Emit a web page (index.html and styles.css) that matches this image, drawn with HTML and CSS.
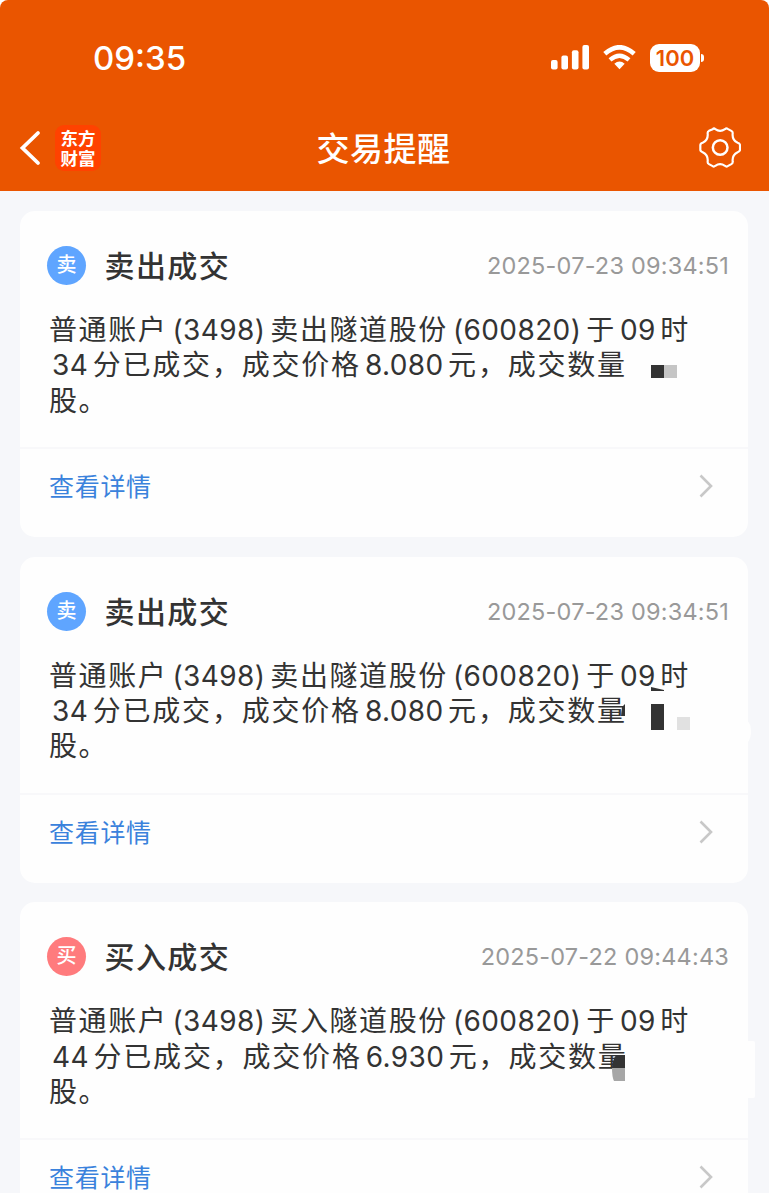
FILE: index.html
```
<!DOCTYPE html>
<html lang="zh-CN">
<head>
    <meta charset="UTF-8">
    <meta name="viewport" content="width=device-width, initial-scale=1.0">
    <title>交易提醒</title>
    <link rel="stylesheet" href="styles.css">
</head>
<body>
    <header class="header">
        <div class="status-bar">
            <span class="clock">09:35</span>
            <div class="status-icons">
                <svg class="signal" viewBox="0 0 38 25" fill="#fff">
                    <rect x="0" y="15" width="6.6" height="9.5" rx="2"/>
                    <rect x="10.4" y="10.5" width="6.6" height="14" rx="2"/>
                    <rect x="20.9" y="5.2" width="6.6" height="19.3" rx="2"/>
                    <rect x="31.4" y="0" width="6.6" height="24.5" rx="2"/>
                </svg>
                <svg class="wifi" viewBox="0 0 33 25">
                    <path d="M1.800 8.800 Q16.500 -4.200 31.200 8.800" fill="none" stroke="#fff" stroke-width="4.600"/>
                    <path d="M7 14.800 Q16.500 6.500 26 14.800" fill="none" stroke="#fff" stroke-width="4.300"/>
                    <path d="M11.300 18.800 Q16.500 14.400 21.700 18.800 L16.500 24.300 Z" fill="#fff"/>
                </svg>
                <div class="battery">100</div>
            </div>
        </div>
        <nav class="nav-bar">
            <div class="nav-left">
                <svg class="back" viewBox="0 0 22 36">
                    <path d="M19 3 L3.500 18 L19 33" fill="none" stroke="#fff" stroke-width="3.800" stroke-linecap="round"/>
                </svg>
                <div class="logo"><span>东方</span><span>财富</span></div>
            </div>
            <h1>交易提醒</h1>
            <svg class="gear" viewBox="478 290 126 122" fill="none" stroke="#fff">
                <path d="M519 296 Q523 292 527 296 Q541 306 556 296 Q560 292 564 295 L575 301 Q580 304 579 309 Q577 329 594 337 Q601 339 601 344 L601 358 Q601 363 594 365 Q577 373 579 393 Q580 398 575 401 L564 407 Q560 410 556 406 Q541 396 527 406 Q523 410 519 407 L508 401 Q503 398 504 393 Q506 373 489 365 Q482 363 482 358 L482 344 Q482 339 489 337 Q506 329 504 309 Q503 304 508 301 Z" stroke-width="6.500" stroke-linejoin="round"/>
                <circle cx="541.500" cy="351" r="22" stroke-width="7.500"/>
            </svg>
        </nav>
    </header>

    <main class="list">
        <section class="card">
            <div class="card-head">
                <span class="badge sell">卖</span>
                <h2>卖出成交</h2>
                <time>2025-07-23 09:34:51</time>
            </div>
            <div class="message">
                <p>普通账户<b class="code">(3498)</b>卖出隧道股份<b class="code">(600820)</b>于<b>09</b>时</p>
                <p><b class="first">34</b>分已成交，成交价格<b>8.080</b>元，成交数量</p>
                <p>股。</p>
            </div>
            <a class="detail" href="#">
                <span>查看详情</span>
                <svg class="arrow" viewBox="0 0 14 24"><path d="M1.500 1.500 L12 12 L1.500 22.500" fill="none" stroke="#c8c8c8" stroke-width="2.600"/></svg>
            </a>
            <svg class="mask mask-1" viewBox="0 0 26 13">
                <rect width="13" height="13" fill="#333"/>
                <rect x="13" width="13" height="13" fill="#c5c5c5"/>
            </svg>
        </section>

        <section class="card">
            <div class="card-head">
                <span class="badge sell">卖</span>
                <h2>卖出成交</h2>
                <time>2025-07-23 09:34:51</time>
            </div>
            <div class="message">
                <p>普通账户<b class="code">(3498)</b>卖出隧道股份<b class="code">(600820)</b>于<b>09</b>时</p>
                <p><b class="first">34</b>分已成交，成交价格<b>8.080</b>元，成交数量</p>
                <p>股。</p>
            </div>
            <a class="detail" href="#">
                <span>查看详情</span>
                <svg class="arrow" viewBox="0 0 14 24"><path d="M1.500 1.500 L12 12 L1.500 22.500" fill="none" stroke="#c8c8c8" stroke-width="2.600"/></svg>
            </a>
            <svg class="mask mask-2" viewBox="0 0 131 56">
                <path d="M2 20 L5 17 V29 H1 Z" fill="#333"/>
                <path d="M31 0 L44 3 V4 H31 Z" fill="#333"/>
                <rect x="31" y="17" width="13" height="26" fill="#333"/>
                <rect x="57" y="30" width="13" height="13" fill="#e1e1e1"/>
                <path d="M127 34 Q131 36 131 45 Q131 52 127 56 Z" fill="#fefefe"/>
            </svg>
        </section>

        <section class="card">
            <div class="card-head">
                <span class="badge buy">买</span>
                <h2>买入成交</h2>
                <time>2025-07-22 09:44:43</time>
            </div>
            <div class="message">
                <p>普通账户<b class="code">(3498)</b>买入隧道股份<b class="code">(600820)</b>于<b>09</b>时</p>
                <p><b class="first">44</b>分已成交，成交价格<b>6.930</b>元，成交数量</p>
                <p>股。</p>
            </div>
            <a class="detail" href="#">
                <span>查看详情</span>
                <svg class="arrow" viewBox="0 0 14 24"><path d="M1.500 1.500 L12 12 L1.500 22.500" fill="none" stroke="#c8c8c8" stroke-width="2.600"/></svg>
            </a>
            <svg class="mask mask-3" viewBox="0 0 143 57">
                <path d="M0 27 Q1 14 6 14 H13 V27 Z" fill="#333"/>
                <path d="M0 27 H13 V40 H2 Q0 36 0 27 Z" fill="#a6a6a6"/>
                <rect x="134" y="0" width="9" height="57" rx="2" fill="#fefefe"/>
            </svg>
        </section>
    </main>
</body>
</html>
```
FILE: styles.css
```
* {
    box-sizing: border-box;
}

html {
    background: #fff;
}

body {
    margin: 0;
    height: 1193px;
    overflow: hidden;
    font-family: Inter, "Noto Sans CJK SC", sans-serif;
    color: #333;
}

h1, h2, p {
    margin: 0;
}

.header {
    height: 191px;
    background: #ea5500;
    border-radius: 8px 8px 0 0;
    color: #fff;
}

.status-bar {
    height: 105px;
    padding: 10px 69px 0 93px;
    display: flex;
    align-items: center;
    justify-content: space-between;
}

.clock {
    font-size: 33px;
    font-weight: 500;
    letter-spacing: 0;
}

.status-icons {
    display: flex;
    align-items: center;
}

.signal {
    width: 38px;
    height: 25px;
    margin-right: 14px;
}

.wifi {
    width: 33px;
    height: 25px;
    margin-right: 14px;
}

.battery {
    position: relative;
    width: 50px;
    height: 28px;
    border-radius: 9px;
    background: #fff;
    color: #ea5500;
    font-size: 22px;
    font-weight: 600;
    line-height: 28px;
    text-align: center;
}

.battery::after {
    content: "";
    position: absolute;
    right: -4px;
    top: 10px;
    width: 3px;
    height: 8px;
    border-radius: 0 4px 4px 0;
    background: #fff;
}

.nav-bar {
    height: 84px;
    padding: 0 28px 0 19px;
    display: grid;
    grid-template-columns: 1fr auto 1fr;
    align-items: center;
}

.nav-left {
    padding-top: 2px;
    display: flex;
    align-items: center;
    gap: 14px;
}

.back {
    width: 22px;
    height: 36px;
}

.logo {
    width: 46px;
    height: 46px;
    padding-top: 3px;
    border-radius: 9px;
    background: #ff4200;
    display: flex;
    flex-direction: column;
    align-items: center;
    font: 700 17.5px/20px "Noto Sans CJK SC", sans-serif;
}

.nav-bar h1 {
    margin-left: 7px;
    font-size: 33px;
    font-weight: 500;
    letter-spacing: 0.5px;
}

.gear {
    width: 42px;
    height: 41px;
    justify-self: end;
}

.list {
    height: 1002px;
    padding: 20px 21px 0 20px;
    background: #f6f7fa;
    display: flex;
    flex-direction: column;
    gap: 19.6px;
}

.card {
    position: relative;
    flex: none;
    height: 326px;
    border-radius: 15px;
    background: #fefefe;
}

.card-head {
    height: 100px;
    padding: 9px 19px 0 27px;
    display: flex;
    align-items: center;
}

.badge {
    width: 39px;
    height: 39px;
    border-radius: 50%;
    color: #fff;
    font-size: 20px;
    font-weight: 500;
    line-height: 38px;
    text-align: center;
}

.sell {
    background: #5fa5ff;
}

.buy {
    background: #ff7b7d;
}

.card-head h2 {
    margin-left: 18.5px;
    padding-bottom: 3px;
    font-size: 30px;
    font-weight: 500;
    letter-spacing: 1.4px;
}

.card-head time {
    margin-left: auto;
    font-size: 23.5px;
    letter-spacing: 0.2px;
    color: #999;
}

.message {
    height: 136px;
    padding: 2px 0 0 29px;
    font-size: 28px;
    letter-spacing: 1.6px;
}

.message p {
    height: 35.4px;
    line-height: 35.4px;
    white-space: nowrap;
}

.message p:nth-child(2) {
    letter-spacing: 1.8px;
}

.message b {
    font-weight: 400;
    letter-spacing: 0.4px;
    margin: 0 4.5px 0 4px;
}

.message .code {
    margin: 0 5px;
}

.message .first {
    margin-left: 3px;
}

.detail {
    height: 90px;
    padding: 0 35px 14px 29px;
    border-top: 2px solid #f8f8fa;
    display: flex;
    align-items: center;
    justify-content: space-between;
    font-size: 25px;
    letter-spacing: 0.7px;
    color: #3a82dc;
    text-decoration: none;
}

.detail span {
    padding-bottom: 2px;
}

.arrow {
    width: 14px;
    height: 24px;
}

/* blocks that cover the share count */
.mask {
    position: absolute;
}

.mask-1 {
    left: 631px;
    top: 154px;
    width: 26px;
    height: 13px;
}

.mask-2 {
    left: 600px;
    top: 130px;
    width: 131px;
    height: 56px;
}

.mask-3 {
    left: 592px;
    top: 139px;
    width: 143px;
    height: 57px;
}
```
